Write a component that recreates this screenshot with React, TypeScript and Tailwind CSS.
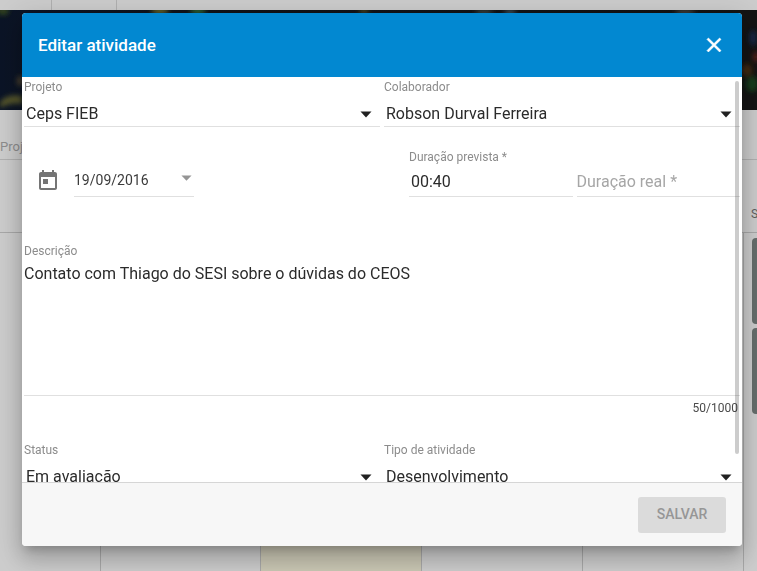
import { useState } from "react";
import type { ReactNode } from "react";

type SelectFieldProps = { id: string; label: string; options: string[] };

function Caret({ className }: { className: string }) {
  return (
    <svg viewBox="0 0 12 8" preserveAspectRatio="none" aria-hidden="true" className={className}>
      <path d="M0.5 0.5h11L6 7.5z" fill="currentColor" />
    </svg>
  );
}

function SelectField({ id, label, options }: SelectFieldProps) {
  return (
    <div className="mx-0.5 flex min-w-0 flex-1 flex-col">
      <label htmlFor={id} className="text-xs leading-5 text-[#8c8c8c]">
        {label}
      </label>
      <div className="relative mt-1 border-b border-[#e0e0e0]">
        <select id={id} className="block h-[25px] w-full appearance-none bg-transparent pl-0.5 pr-6 text-base text-[#2b2b2b] outline-none">
          {options.map((option) => (
            <option key={option}>{option}</option>
          ))}
        </select>
        <Caret className="pointer-events-none absolute right-2 top-[10px] h-[7px] w-3 text-[#212121]" />
      </div>
    </div>
  );
}

function Column({ children, className }: { children?: ReactNode; className: string }) {
  return <div className={className}>{children}</div>;
}

function Banner() {
  return (
    <svg viewBox="0 0 757 100" preserveAspectRatio="none" aria-hidden="true" className="block h-[100px] w-full">
      <defs>
        <linearGradient id="night" x1="0" x2="1">
          <stop offset="0" stopColor="#0b1426" />
          <stop offset="0.25" stopColor="#101319" />
          <stop offset="1" stopColor="#141414" />
        </linearGradient>
        <filter id="soft" x="-50%" y="-50%" width="200%" height="200%">
          <feGaussianBlur stdDeviation="2.5" />
        </filter>
      </defs>
      <rect width="757" height="100" fill="url(#night)" />
      <g filter="url(#soft)">
        <path d="M0 92q8-9 22-6v8q-12-2-22 4z" fill="#55552a" />
        <ellipse cx="20" cy="71" rx="3" ry="5" fill="#4b3f2a" />
        <ellipse cx="3" cy="1" rx="6" ry="4" fill="#33451f" />
        <ellipse cx="160" cy="1" rx="9" ry="3" fill="#6b6a2b" />
        <ellipse cx="198" cy="1" rx="8" ry="3" fill="#2f6a39" />
        <ellipse cx="364" cy="1" rx="5" ry="2" fill="#595425" />
        <ellipse cx="484" cy="2" rx="9" ry="2" fill="#46534f" />
        <ellipse cx="510" cy="2" rx="6" ry="2" fill="#4d626b" />
        <ellipse cx="685" cy="2" rx="10" ry="2" fill="#52514a" />
        <ellipse cx="753" cy="28" rx="4" ry="8" fill="#132645" />
        <ellipse cx="747" cy="60" rx="5" ry="6" fill="#42290f" />
        <ellipse cx="756" cy="47" rx="3" ry="5" fill="#5a2416" />
        <ellipse cx="752" cy="74" rx="6" ry="8" fill="#133d1b" />
      </g>
    </svg>
  );
}

function SchedulePage() {
  return (
    <div aria-hidden="true" className="flex h-screen flex-col overflow-hidden bg-[#cccccc]">
      <div className="flex h-[10px] shrink-0">
        <div className="w-[52px] border-r border-[#b0b0b0]" />
        <div className="w-[65px] border-r border-[#b0b0b0]" />
      </div>
      <div className="shrink-0">
        <Banner />
      </div>
      <div className="flex h-[50px] shrink-0 items-end border-b border-[#b0b0b0] pb-1">
        <span className="text-[13px] leading-4 text-[#8c8c8c]">Projeto</span>
      </div>
      <div className="flex h-[73px] shrink-0 items-end justify-end border-b border-[#a8a8a8]">
        <span className="w-1.5 pb-2.5 text-xs leading-4 text-[#5e5e5e]">S</span>
      </div>
      <div className="grid flex-1 grid-cols-[101px_160px_161px_161px_161px_1fr]">
        <Column className="border-r border-[#a8a8a8]" />
        <Column className="border-r border-[#a8a8a8]" />
        <Column className="border-r border-[#a8a8a8] bg-[#cac7b4]" />
        <Column className="border-r border-[#a8a8a8]" />
        <Column className="border-r border-[#a8a8a8]" />
        <Column className="flex flex-col gap-1 pl-2 pt-[5px]">
          <div className="h-[86px] rounded-l bg-[#666d6b]" />
          <div className="h-[86px] rounded-l bg-[#666d6b]" />
        </Column>
      </div>
    </div>
  );
}

export default function App() {
  const [description, setDescription] = useState("Contato com Thiago do SESI sobre o dúvidas do CEOS");
  const [realDuration, setRealDuration] = useState("");

  return (
    <div className="font-['Roboto','Liberation_Sans',sans-serif]">
      <SchedulePage />
      <div className="fixed inset-0 flex pb-[25px] pl-[22px] pr-[15px] pt-[13px]">
        <form
          role="dialog"
          aria-labelledby="dialog-title"
          className="flex min-w-0 flex-1 flex-col overflow-hidden rounded bg-white shadow-[0_7px_9px_-4px_rgba(0,0,0,0.2),0_14px_21px_2px_rgba(0,0,0,0.14),0_5px_26px_4px_rgba(0,0,0,0.12)]"
        >
          <header className="flex h-16 shrink-0 items-center justify-between bg-[#0288d1] px-4 text-white">
            <h2 id="dialog-title" className="text-[17px] font-medium leading-6">
              Editar atividade
            </h2>
            <button type="button" aria-label="Fechar" className="flex size-6 items-center justify-center">
              <svg viewBox="0 0 24 24" aria-hidden="true" className="size-6">
                <path
                  d="M19 6.41 17.59 5 12 10.59 6.41 5 5 6.41 10.59 12 5 17.59 6.41 19 12 13.41 17.59 19 19 17.59 13.41 12z"
                  fill="currentColor"
                  stroke="currentColor"
                  strokeWidth="0.6"
                />
              </svg>
            </button>
          </header>

          <div className="relative min-h-0 flex-1 overflow-hidden">
            <div className="flex">
              <SelectField id="project" label="Projeto" options={["Ceps FIEB"]} />
              <SelectField id="member" label="Colaborador" options={["Robson Durval Ferreira"]} />
            </div>

            <div className="mt-5 flex items-end">
              <div className="flex flex-1 items-end pl-3.5">
                <svg viewBox="0 0 24 24" aria-hidden="true" className="mb-1 size-6 text-[#757575]">
                  <path
                    d="M19 3h-1V1h-2v2H8V1H6v2H5c-1.11 0-1.99.9-1.99 2L3 19c0 1.1.89 2 2 2h14c1.1 0 2-.9 2-2V5c0-1.1-.9-2-2-2zm0 16H5V8h14v11zM7 10h5v5H7z"
                    fill="currentColor"
                  />
                </svg>
                <div className="ml-3.5 flex w-[120px] items-center border-b border-[#e0e0e0] pb-1.5">
                  <input aria-label="Data" defaultValue="19/09/2016" className="h-5 w-full min-w-0 bg-transparent text-sm text-[#3b3b3b] outline-none" />
                  <button type="button" aria-label="Abrir calendário" className="pb-1 pr-0.5">
                    <Caret className="h-1.5 w-[11px] text-[#959595]" />
                  </button>
                </div>
              </div>
              <div className="flex w-[335px]">
                <div className="mx-0.5 flex min-w-0 flex-1 flex-col">
                  <label htmlFor="planned" className="text-xs leading-5 text-[#8c8c8c]">
                    Duração prevista *
                  </label>
                  <input id="planned" defaultValue="00:40" className="h-[30px] w-full border-b border-[#e0e0e0] pl-0.5 text-base text-[#2b2b2b] outline-none" />
                </div>
                <div className="relative mx-0.5 flex min-w-0 flex-1 flex-col justify-end">
                  <label htmlFor="real" className={realDuration ? "sr-only" : "pointer-events-none absolute bottom-[3px] left-0 text-base leading-6 text-[#a6a6a6]"}>
                    Duração real *
                  </label>
                  <input
                    id="real"
                    value={realDuration}
                    onChange={(event) => setRealDuration(event.target.value)}
                    className="h-[30px] w-full border-b border-[#e0e0e0] bg-transparent pl-0.5 text-base text-[#2b2b2b] outline-none"
                  />
                </div>
              </div>
            </div>

            <div className="mx-0.5 mt-11 flex flex-col">
              <label htmlFor="description" className="text-xs leading-5 text-[#8c8c8c]">
                Descrição
              </label>
              <textarea
                id="description"
                maxLength={1000}
                value={description}
                onChange={(event) => setDescription(event.target.value)}
                className="block h-[135px] w-full resize-none border-b border-[#e0e0e0] pt-px text-base text-[#2b2b2b] outline-none"
              />
              <div className="mt-1 pr-0.5 text-right text-xs leading-4 text-[#4a4a4a]">{description.length}/1000</div>
            </div>

            <div className="mt-6 flex">
              <SelectField id="status" label="Status" options={["Em avaliação"]} />
              <SelectField id="kind" label="Tipo de atividade" options={["Desenvolvimento"]} />
            </div>

            <div className="absolute bottom-7 right-[3px] top-1 w-1 rounded-full bg-black/20" />
          </div>

          <footer className="flex h-16 shrink-0 items-center justify-end border-t border-[#d6d6d6] bg-[#f7f7f7] px-4">
            <button type="submit" disabled className="h-9 min-w-[88px] rounded-[3px] bg-[#dbdbdb] px-4 pb-0.5 text-sm font-medium text-[#969696]">
              SALVAR
            </button>
          </footer>
        </form>
      </div>
    </div>
  );
}
